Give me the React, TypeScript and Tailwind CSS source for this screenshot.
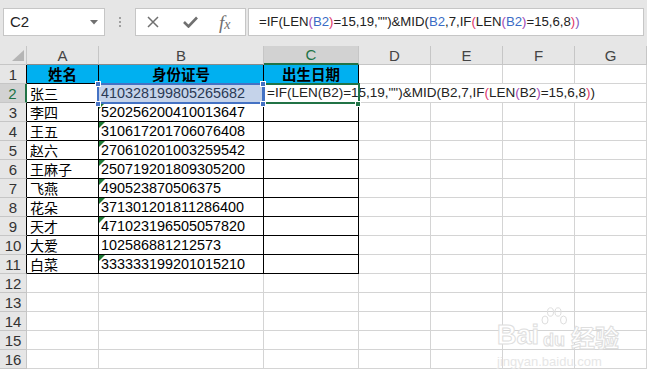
import React from "react";

const NUM = "'Liberation Sans', 'Noto Sans CJK SC', sans-serif";
const CJK = "'Noto Sans CJK SC', sans-serif";

const data: [string, string, boolean][] = [
  ["张三", "410328199805265682", false],
  ["李四", "520256200410013647", true],
  ["王五", "310617201706076408", true],
  ["赵六", "270610201003259542", true],
  ["王麻子", "250719201809305200", true],
  ["飞燕", "490523870506375", true],
  ["花朵", "371301201811286400", true],
  ["天才", "471023196505057820", true],
  ["大爱", "102586881212573", false],
  ["白菜", "333333199201015210", true],
];

type Seg = [string, string];
const K = "#222222";
const BL = "#3b6cc5";
const PU = "#a347b4";
const RD = "#e0366a";

const barSegs: Seg[] = [
  ["=IF(LEN", K],
  ["(", PU],
  ["B2", BL],
  [")", RD],
  ['=15,19,"")&MID(', K],
  ["B2", BL],
  [",7,IF", K],
  ["(", RD],
  ["LEN", K],
  ["(", PU],
  ["B2", BL],
  [")", PU],
  ["=15,6,8", K],
  [")", RD],
  [")", "#7d5cc0"],
];

const cellSegs: Seg[] = [
  ['=IF(LEN(B2)=15,19,"")&MID(B2,7,IF', K],
  ["(", RD],
  ["LEN", K],
  ["(", PU],
  ["B2", K],
  [")", PU],
  ["=15,6,8", K],
  [")", RD],
  [")", K],
];

const letters = ["A", "B", "C", "D", "E", "F", "G"];

function TopBar() {
  return (
    <div className="h-[46px] bg-[#e6e6e6] flex items-start pt-[8px]">
      <div className="ml-[3px] w-[102px] h-[28px] bg-white border border-[#c6c6c6] flex items-center pl-[6px] justify-between pr-[6px]">
        <span className="text-[15px] text-[#222]" style={{ fontFamily: NUM }}>
          C2
        </span>
        <svg width="8" height="5" viewBox="0 0 8 5">
          <polygon points="0,0 8,0 4,4.5" fill="#707070" />
        </svg>
      </div>
      <div className="w-[30px] h-[28px] flex flex-col items-center justify-center gap-[2px]">
        <div className="w-[2px] h-[2px] bg-[#a0a0a0]" />
        <div className="w-[2px] h-[2px] bg-[#a0a0a0]" />
        <div className="w-[2px] h-[2px] bg-[#a0a0a0]" />
      </div>
      <div className="w-[111px] h-[28px] bg-white border border-[#c6c6c6] flex items-center">
        <svg className="ml-[11px]" width="12" height="12" viewBox="0 0 12 12">
          <path d="M1 1 L11 11 M11 1 L1 11" stroke="#707070" strokeWidth="1.5" />
        </svg>
        <svg className="ml-[24px]" width="15" height="12" viewBox="0 0 15 12">
          <path d="M1 6 L5.5 10.5 L14 1.5" stroke="#707070" strokeWidth="2.6" fill="none" />
        </svg>
        <span
          className="ml-[21px] text-[19px] italic text-[#707070] leading-none"
          style={{ fontFamily: "'Liberation Serif', serif" }}
        >
          f<span className="text-[14px]">x</span>
        </span>
      </div>
      <div className="ml-[2px] w-[396px] h-[28px] bg-white border border-[#c6c6c6] flex items-center pl-[10px]">
        <span className="text-[13.2px] whitespace-nowrap" style={{ fontFamily: NUM }}>
          {barSegs.map(([t, c], i) => (
            <span key={i} style={{ color: c }}>
              {t}
            </span>
          ))}
        </span>
      </div>
    </div>
  );
}

function HeaderRow() {
  return (
    <>
      <div className="bg-[#e6e6e6] border-r border-b border-[#c6c6c6] relative">
        <svg className="absolute left-0 top-0" width="26" height="18" viewBox="0 0 26 18">
          <polygon points="12,15 24,15 24,4" fill="#b5b5b5" />
        </svg>
      </div>
      {letters.map((l) => {
        const sel = l === "C";
        const bottom = l === "A" || l === "B" ? "border-b-[#8a8a8a]" : "border-b-[#c6c6c6]";
        return (
          <div
            key={l}
            className={
              sel
                ? "bg-[#d2d2d2] border-r border-r-[#c6c6c6] border-b-2 border-b-[#217346] text-[#217346] flex items-center justify-center text-[15px] leading-none"
                : "bg-[#e6e6e6] border-r border-r-[#c6c6c6] border-b " + bottom + " text-[#444] flex items-center justify-center text-[15px] leading-none"
            }
            style={{ fontFamily: NUM }}
          >
            {l}
          </div>
        );
      })}
    </>
  );
}

function RowHeader({ r }: { r: number }) {
  let cls =
    "bg-[#e6e6e6] border-b border-b-[#c6c6c6] border-r border-r-[#c6c6c6] text-[#333] flex items-center justify-center text-[15px] leading-none";
  if (r === 2)
    cls =
      "bg-[#d2d2d2] border-b border-b-[#c6c6c6] border-r-2 border-r-[#217346] text-[#217346] flex items-center justify-center text-[15px] leading-none";
  else if (r <= 11)
    cls =
      "bg-[#e6e6e6] border-b border-b-[#c6c6c6] border-r border-r-black text-[#333] flex items-center justify-center text-[15px] leading-none";
  return (
    <div className={cls} style={{ fontFamily: NUM }}>
      {r}
    </div>
  );
}

function Tri() {
  return (
    <svg className="absolute left-0 top-0" width="6" height="6" viewBox="0 0 6 6">
      <polygon points="0,0 6,0 0,6" fill="#1f7a36" />
    </svg>
  );
}

function Row({ r }: { r: number }) {
  const cells: React.ReactNode[] = [];
  cells.push(<RowHeader key="h" r={r} />);
  if (r === 1) {
    ["姓名", "身份证号", "出生日期"].map((t, i) =>
      cells.push(
        <div
          key={"c" + i}
          className="bg-[#00b0f0] border-r border-b border-black flex items-center justify-center font-bold text-[14.5px] leading-none text-black"
          style={{ fontFamily: CJK }}
        >
          {t}
        </div>
      )
    );
  } else if (r <= 11) {
    const [name, id, tri] = data[r - 2];
    cells.push(
      <div
        key="a"
        className="border-r border-b border-black flex items-center pl-[3px] text-[14px] leading-none text-black"
        style={{ fontFamily: CJK }}
      >
        {name}
      </div>
    );
    cells.push(
      <div
        key="b"
        className={
          r === 2
            ? "relative bg-[#c5d3ea] border-r border-b border-black flex items-center pl-[2px] text-[14.4px] leading-none text-[#2b3a55]"
            : "relative border-r border-b border-black flex items-center pl-[2px] text-[14.4px] leading-none text-black"
        }
        style={{ fontFamily: NUM }}
      >
        {tri && <Tri />}
        <span className="relative">{id}</span>
      </div>
    );
    cells.push(
      <div
        key="c"
        className="relative z-10 border-r border-b border-black flex items-center pl-[3px] text-[13.5px] leading-none"
        style={{ fontFamily: NUM }}
      >
        {r === 2 && (
          <span className="whitespace-nowrap">
            {cellSegs.map(([t, c], i) => (
              <span key={i} style={{ color: c }}>
                {t}
              </span>
            ))}
          </span>
        )}
      </div>
    );
  } else {
    cells.push(<div key="a" className="border-r border-b border-[#d4d4d4]" />);
    cells.push(<div key="b" className="border-r border-b border-[#d4d4d4]" />);
    cells.push(<div key="c" className="border-r border-b border-[#d4d4d4]" />);
  }
  for (let i = 0; i < 4; i++) {
    const hideR = r === 2 && i < 3;
    cells.push(
      <div
        key={"x" + i}
        className={hideR ? "border-b border-[#d4d4d4]" : "border-r border-b border-[#d4d4d4]"}
      />
    );
  }
  return <>{cells}</>;
}

function Watermark() {
  return (
    <div className="absolute left-[497px] top-[322px] flex flex-col items-start pointer-events-none select-none z-40">
      <div className="flex items-end">
        <span
          className="text-[27px] font-bold leading-none text-white"
          style={{ fontFamily: NUM, WebkitTextStroke: "1px #dedede" }}
        >
          Bai
        </span>
        <div className="relative w-[30px] h-[26px] flex items-end justify-center">
          <svg className="absolute left-[1px] top-[-16px]" width="28" height="22" viewBox="0 0 28 22">
            <ellipse cx="5" cy="13" rx="3" ry="4" fill="none" stroke="#dedede" />
            <ellipse cx="10.5" cy="5" rx="3" ry="4.2" fill="none" stroke="#dedede" />
            <ellipse cx="18" cy="5" rx="3" ry="4.2" fill="none" stroke="#dedede" />
            <ellipse cx="23.5" cy="13" rx="3" ry="4" fill="none" stroke="#dedede" />
          </svg>
          <span
            className="text-[18px] font-bold leading-none text-white"
            style={{ fontFamily: NUM, WebkitTextStroke: "1px #dedede" }}
          >
            du
          </span>
        </div>
        <span
          className="text-[24px] font-bold leading-none text-white ml-[2px]"
          style={{ fontFamily: CJK, WebkitTextStroke: "1px #dedede" }}
        >
          经验
        </span>
      </div>
      <span className="mt-[6px] text-[13px] leading-none text-[#e6e6e6]" style={{ fontFamily: NUM }}>
        jingyan.baidu.com
      </span>
    </div>
  );
}

export default function App() {
  const rows = Array.from({ length: 16 }, (_, i) => i + 1);
  return (
    <div className="w-[647px] h-[369px] overflow-hidden bg-white relative">
      <TopBar />
      <div className="relative grid grid-cols-[27px_72px_165px_95px_72px_72px_72px_72px] auto-rows-[19px]">
        <HeaderRow />
        {rows.map((r) => (
          <Row key={r} r={r} />
        ))}
        <div className="absolute left-[97px] top-[37px] w-[167px] h-[21px] border-2 border-[#4472c4] pointer-events-none z-20" />
        <div className="absolute left-[263px] top-[37px] w-[97px] h-[21px] border-2 border-[#217346] border-l-[#4472c4] pointer-events-none z-20" />
        <div className="absolute left-[95px] top-[35px] w-[6px] h-[6px] bg-[#4472c4] border border-white z-30" />
        <div className="absolute left-[260px] top-[35px] w-[6px] h-[6px] bg-[#4472c4] border border-white z-30" />
        <div className="absolute left-[95px] top-[55px] w-[6px] h-[6px] bg-[#4472c4] border border-white z-30" />
        <div className="absolute left-[260px] top-[55px] w-[6px] h-[6px] bg-[#4472c4] border border-white z-30" />
        <div className="absolute left-[355px] top-[55px] w-[6px] h-[6px] bg-[#217346] border border-white z-30" />
      </div>
      <Watermark />
    </div>
  );
}
